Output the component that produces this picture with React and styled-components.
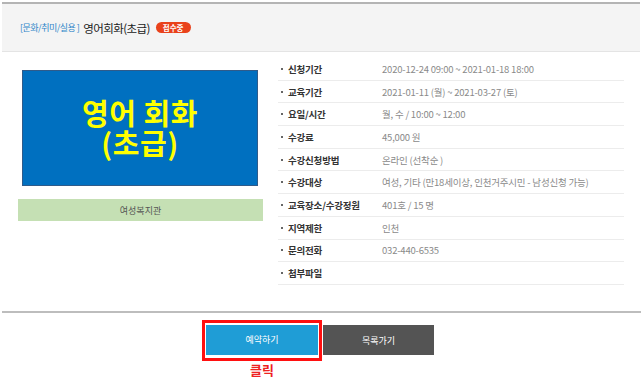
import React from 'react';
import styled, { createGlobalStyle } from 'styled-components';

const GlobalStyle = createGlobalStyle`
  html, body {
    margin: 0;
    padding: 0;
    background: #ffffff;
    font-family: "Noto Sans CJK KR", "Noto Sans", sans-serif;
  }
`;

const Page = styled.div`
  width: 643px;
  height: 378px;
  padding: 2px 3px 0 2px;
  box-sizing: border-box;
  overflow: hidden;
`;

const TitleBar = styled.div`
  height: 50px;
  box-sizing: border-box;
  border-top: 2px solid #b4b4b4;
  border-bottom: 1px solid #e4e4e4;
  background: #f4f4f4;
  display: flex;
  align-items: center;
  padding-left: 18px;
  gap: 4px;
`;

const Category = styled.span`
  color: #2f86c9;
  font-size: 9px;
  letter-spacing: -0.5px;
`;

const CourseName = styled.span`
  color: #222;
  font-size: 11.5px;
  letter-spacing: -0.6px;
`;

const Badge = styled.span`
  background: #e9421b;
  color: #fff;
  font-size: 7.5px;
  font-weight: 700;
  border-radius: 6px;
  padding: 0 7px;
  height: 11px;
  line-height: 11px;
  margin-left: 2px;
`;

const Content = styled.div`
  height: 259px;
  display: flex;
  border-bottom: 2px solid #bdbdbd;
  margin-right: -1px;
`;

const LeftCol = styled.div`
  width: 245px;
  margin-left: 16px;
  padding-top: 18px;
  display: flex;
  flex-direction: column;
`;

const Poster = styled.div`
  width: 236px;
  height: 116px;
  margin-left: 4px;
  background: #0070c0;
  border: 1px solid #2f5b8a;
  box-sizing: border-box;
  display: flex;
  flex-direction: column;
  align-items: center;
  justify-content: center;
  color: #ffff00;
  font-weight: 700;
  font-size: 29px;
  line-height: 30px;
  letter-spacing: 0.5px;
  padding-bottom: 2px;
`;

const Place = styled.div`
  margin-top: 13px;
  height: 22px;
  background: #c5e0b4;
  display: flex;
  align-items: center;
  justify-content: center;
  font-size: 9px;
  color: #555;
`;

const InfoList = styled.ul`
  list-style: none;
  margin: 0 0 0 15px;
  padding: 6px 0 0;
  width: 346px;
`;

const InfoRow = styled.li`
  height: 22.7px;
  box-sizing: border-box;
  border-bottom: 1px solid #ececec;
  display: flex;
  align-items: center;
  font-size: 9.5px;
  letter-spacing: -0.2px;
`;

const Label = styled.span`
  width: 101px;
  padding-left: 3px;
  color: #333;
  font-weight: 700;
  display: flex;
  align-items: center;
  &::before {
    content: '';
    width: 2px;
    height: 2px;
    background: #666;
    margin-right: 5px;
  }
`;

const Value = styled.span`
  color: #8a8a8a;
`;

const Actions = styled.div`
  display: flex;
  justify-content: center;
  align-items: flex-start;
  padding: 7px 6px 0 0;
`;

const Highlight = styled.div`
  display: flex;
  flex-direction: column;
  align-items: center;
  margin-right: 1px;
`;

const RedFrame = styled.div`
  border: 3px solid #ff1010;
  padding: 1px 1px 3px 1px;
`;

const Button = styled.button`
  width: ${p => p.$w}px;
  height: 30px;
  border: none;
  margin: 0;
  background: ${p => (p.$dark ? '#545454' : '#1f9dd6')};
  color: #fff;
  font-family: inherit;
  font-size: 9px;
  cursor: pointer;
  margin-top: ${p => (p.$dark ? 5 : 0)}px;
`;

const Click = styled.div`
  margin-top: 1px;
  color: #ee2222;
  font-weight: 700;
  font-size: 13px;
  line-height: 15px;
`;

const info = [
  ['신청기간', '2020-12-24 09:00 ~ 2021-01-18 18:00'],
  ['교육기간', '2021-01-11 (월) ~ 2021-03-27 (토)'],
  ['요일/시간', '월, 수 / 10:00 ~ 12:00'],
  ['수강료', '45,000 원'],
  ['수강신청방법', '온라인 (선착순 )'],
  ['수강대상', '여성, 기타 (만18세이상, 인천거주시민 - 남성신청 가능)'],
  ['교육장소/수강정원', '401호 / 15 명'],
  ['지역제한', '인천'],
  ['문의전화', '032-440-6535'],
  ['첨부파일', ''],
];

export default function App() {
  return (
    <Page>
      <GlobalStyle />
      <TitleBar>
        <Category>[문화/취미/실용 ]</Category>
        <CourseName>영어회화(초급)</CourseName>
        <Badge>접수중</Badge>
      </TitleBar>
      <Content>
        <LeftCol>
          <Poster>
            <div>영어 회화</div>
            <div>(초급)</div>
          </Poster>
          <Place>여성복지관</Place>
        </LeftCol>
        <InfoList>
          {info.map(([k, v]) => (
            <InfoRow key={k}>
              <Label>{k}</Label>
              <Value>{v}</Value>
            </InfoRow>
          ))}
        </InfoList>
      </Content>
      <Actions>
        <Highlight>
          <RedFrame>
            <Button $w={112}>예약하기</Button>
          </RedFrame>
          <Click>클릭</Click>
        </Highlight>
        <Button $w={111} $dark>목록가기</Button>
      </Actions>
    </Page>
  );
}
